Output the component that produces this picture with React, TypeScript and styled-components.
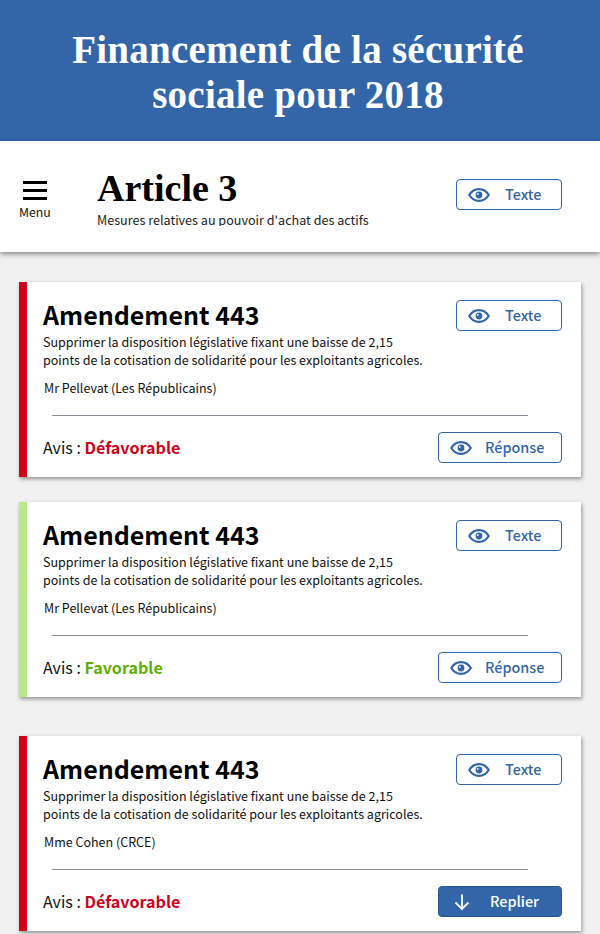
import styled, { createGlobalStyle } from "styled-components";

const SANS = `"Noto Sans CJK SC", "Noto Sans", sans-serif`;
const SERIF = `"Liberation Serif", serif`;
const BLUE = "#3366a8";
const RED = "#d0021b";
const GREEN_TEXT = "#5fb000";
const GREEN_BAR = "#b8e986";

const GlobalStyle = createGlobalStyle`
  html, body {
    margin: 0;
    padding: 0;
    background: #f1f1f1;
    height: 934px;
    overflow: hidden;
  }
  * {
    box-sizing: border-box;
  }
`;

const Banner = styled.header`
  height: 141px;
  background: ${BLUE};
  display: flex;
  align-items: center;
  justify-content: center;
  padding: 3px 4px 0 0;
`;

const BannerTitle = styled.h1`
  margin: 0;
  width: 500px;
  text-align: center;
  color: #fff;
  font: 700 39px/45px ${SERIF};
  letter-spacing: 0.25px;
`;

const ArticleBar = styled.section`
  height: 111px;
  background: #fff;
  box-shadow: 0 2px 5px rgba(0, 0, 0, 0.45);
  display: flex;
  align-items: flex-start;
  padding: 38px 38px 0 19px;
  position: relative;
`;

const MenuButton = styled.div`
  width: 78px;
  display: flex;
  flex-direction: column;
  align-items: flex-start;
  color: #111;
  font: 400 12.3px/16px ${SANS};
`;

const Burger = styled.span`
  width: 24px;
  margin: 2px 0 4px 4px;
  height: 19px;
  border-top: 3px solid #000;
  border-bottom: 3px solid #000;
  position: relative;
  &::after {
    content: "";
    position: absolute;
    left: 0;
    right: 0;
    top: 5px;
    height: 3px;
    background: #000;
  }
`;

const ArticleHeading = styled.div`
  flex: 1;
  margin-top: -12px;
`;

const ArticleTitle = styled.h2`
  margin: 0;
  color: #000;
  font: 700 38px/42px ${SERIF};
`;

const ArticleSubtitle = styled.div`
  margin-top: 2px;
  height: 15px;
  overflow: hidden;
  color: #222;
  font: 400 12.6px/17px ${SANS};
`;

const List = styled.main`
  padding: 30px 19px 0;
`;

const Card = styled.article<{ $accent: string; $gap: number }>`
  height: 195px;
  margin-bottom: ${({ $gap }) => $gap}px;
  background: #fff;
  border-left: 8px solid ${({ $accent }) => $accent};
  box-shadow: 1px 2px 4px rgba(0, 0, 0, 0.4);
  padding: 18px 19px 0 16px;
`;

const CardTop = styled.div`
  display: flex;
  justify-content: space-between;
  align-items: flex-start;
`;

const CardBody = styled.div`
  width: 400px;
`;

const CardTitle = styled.h3`
  margin: -2px 0 2px;
  color: #000;
  font: 700 25px/33px ${SANS};
`;

const CardText = styled.p`
  margin: 0;
  width: 385px;
  color: #111;
  font: 400 12.52px/18px ${SANS};
`;

const Author = styled.div`
  margin: 10px 0 0 1px;
  color: #111;
  font: 400 12.5px/18px ${SANS};
`;

const Divider = styled.hr`
  margin: 18px 34px 0 9px;
  border: 0;
  height: 1px;
  background: #8a8f98;
`;

const CardBottom = styled.div`
  margin-top: 16px;
  display: flex;
  justify-content: space-between;
  align-items: center;
`;

const Avis = styled.div`
  color: #111;
  font: 400 16px/24px ${SANS};
  padding-bottom: 2px;
`;

const AvisValue = styled.strong<{ $color: string }>`
  font-weight: 700;
  font-size: 16.1px;
  color: ${({ $color }) => $color};
`;

const ActionButton = styled.button<{ $filled?: boolean; $width: number; $gap: number }>`
  width: ${({ $width }) => $width}px;
  height: 31px;
  padding: 0 0 0 ${({ $filled }) => ($filled ? 14 : 11)}px;
  display: flex;
  align-items: center;
  gap: ${({ $gap }) => $gap}px;
  border: 1px solid ${({ $filled }) => ($filled ? "#2a5690" : BLUE)};
  border-radius: 4px;
  background: ${({ $filled }) => ($filled ? BLUE : "#fff")};
  color: ${({ $filled }) => ($filled ? "#fff" : BLUE)};
  font: 500 14.4px/20px ${SANS};
  flex-shrink: 0;
`;

const ButtonLabel = styled.span`
  padding-bottom: 2px;
`;

const EyeIcon = () => (
  <svg width="22" height="16" viewBox="0 0 22 16" fill="none">
    <path
      d="M1.3 8C3.5 4.3 7 2.1 11 2.1S18.5 4.3 20.7 8C18.5 11.7 15 13.9 11 13.9S3.5 11.7 1.3 8Z"
      stroke="currentColor"
      strokeWidth="2.2"
    />
    <circle cx="11" cy="8" r="3.4" fill="currentColor" />
    <circle cx="9.8" cy="6.9" r="0.9" fill="#fff" />
  </svg>
);

const ArrowDownIcon = () => (
  <svg width="18" height="18" viewBox="0 0 18 18" fill="none">
    <path
      d="M9 1.5V16M2.5 9.5L9 16L15.5 9.5"
      stroke="currentColor"
      strokeWidth="1.8"
    />
  </svg>
);

type Amendment = {
  accent: string;
  verdict: string;
  verdictColor: string;
  author: string;
  gap: number;
  folded?: boolean;
};

const amendments: Amendment[] = [
  {
    accent: RED,
    verdict: "Défavorable",
    verdictColor: RED,
    author: "Mr Pellevat (Les Républicains)",
    gap: 25,
  },
  {
    accent: GREEN_BAR,
    verdict: "Favorable",
    verdictColor: GREEN_TEXT,
    author: "Mr Pellevat (Les Républicains)",
    gap: 39,
  },
  {
    accent: RED,
    verdict: "Défavorable",
    verdictColor: RED,
    author: "Mme Cohen (CRCE)",
    gap: 0,
    folded: true,
  },
];

const TextButton = () => (
  <ActionButton $width={106} $gap={15}>
    <EyeIcon />
    <ButtonLabel>Texte</ButtonLabel>
  </ActionButton>
);

const App = () => (
  <>
    <GlobalStyle />
    <Banner>
      <BannerTitle>Financement de la sécurité sociale pour 2018</BannerTitle>
    </Banner>
    <ArticleBar>
      <MenuButton>
        <Burger />
        Menu
      </MenuButton>
      <ArticleHeading>
        <ArticleTitle>Article 3</ArticleTitle>
        <ArticleSubtitle>Mesures relatives au pouvoir d'achat des actifs</ArticleSubtitle>
      </ArticleHeading>
      <TextButton />
    </ArticleBar>
    <List>
      {amendments.map((amendment, i) => (
        <Card key={`amendment-${i}`} $accent={amendment.accent} $gap={amendment.gap}>
          <CardTop>
            <CardBody>
              <CardTitle>Amendement 443</CardTitle>
              <CardText>
                Supprimer la disposition législative fixant une baisse de 2,15 points de la
                cotisation de solidarité pour les exploitants agricoles.
              </CardText>
              <Author>{amendment.author}</Author>
            </CardBody>
            <TextButton />
          </CardTop>
          <Divider />
          <CardBottom>
            <Avis>
              Avis : <AvisValue $color={amendment.verdictColor}>{amendment.verdict}</AvisValue>
            </Avis>
            {amendment.folded ? (
              <ActionButton $filled $width={124} $gap={19}>
                <ArrowDownIcon />
                <ButtonLabel>Replier</ButtonLabel>
              </ActionButton>
            ) : (
              <ActionButton $width={124} $gap={13}>
                <EyeIcon />
                <ButtonLabel>Réponse</ButtonLabel>
              </ActionButton>
            )}
          </CardBottom>
        </Card>
      ))}
    </List>
  </>
);

export default App;
